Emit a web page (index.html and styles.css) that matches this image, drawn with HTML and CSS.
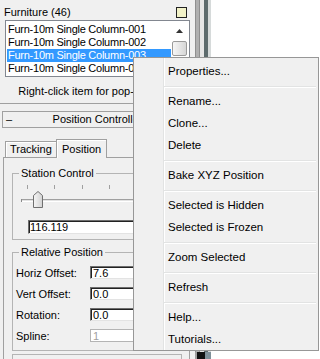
FILE: index.html
```html
<!DOCTYPE html>
<html lang="en">
<head>
  <meta charset="UTF-8" />
  <title>Furniture Rollout</title>
  <link rel="stylesheet" href="styles.css">
</head>
<body>
  <div class="screen">
    <div class="panel">
      <div class="rollout-head">
        <span>Furniture (46)</span>
        <span class="swatch"></span>
      </div>

      <div class="listbox">
        <ul class="items">
          <li>Furn-10m Single Column-001</li>
          <li>Furn-10m Single Column-002</li>
          <li class="selected">Furn-10m Single Column-003</li>
          <li>Furn-10m Single Column-004</li>
        </ul>
        <div class="scrollbar">
          <svg class="arrow-up" width="7" height="4" viewBox="0 0 7 4"><polygon points="0,4 3.5,0 7,4" fill="#333"/></svg>
          <div class="thumb"></div>
        </div>
      </div>

      <p class="hint">Right-click item for pop-up menu</p>

      <div class="rollout-bar">
        <span class="minus">–</span>
        <span class="bar-title">Position Controller</span>
      </div>

      <div class="tabs">
        <div class="tab tracking">Tracking</div>
        <div class="tab active">Position</div>
      </div>

      <div class="tab-page">
        <fieldset class="group">
          <legend>Station Control</legend>
          <svg class="slider" width="150" height="30" viewBox="0 0 150 30">
            <g stroke="#a0a0a0">
              <line x1="6.5" y1="5" x2="6.5" y2="9"/>
              <line x1="33.5" y1="5" x2="33.5" y2="9"/>
              <line x1="61.5" y1="5" x2="61.5" y2="9"/>
              <line x1="88.5" y1="5" x2="88.5" y2="9"/>
            </g>
            <line x1="0" y1="19.5" x2="150" y2="19.5" stroke="#a0a0a0"/>
            <line x1="0" y1="20.5" x2="150" y2="20.5" stroke="#e3e3e3"/>
            <line x1="1" y1="21.5" x2="150" y2="21.5" stroke="#ffffff"/>
            <line x1="0.5" y1="19" x2="0.5" y2="22" stroke="#8a8a8a"/>
            <defs>
              <linearGradient id="thumbFill" x1="0" y1="0" x2="1" y2="0">
                <stop offset="0" stop-color="#f6f6f6"/>
                <stop offset="1" stop-color="#d2d2d2"/>
              </linearGradient>
            </defs>
            <polygon points="12.5,27.5 12.5,15.5 17,11.5 21.5,15.5 21.5,27.5" fill="url(#thumbFill)" stroke="#707070"/>
          </svg>
          <input class="field wide" type="text" value="116.119">
        </fieldset>

        <fieldset class="group">
          <legend>Relative Position</legend>
          <div class="rows">
            <div class="row"><span class="label">Horiz Offset:</span><input class="field" type="text" value="7.6"></div>
            <div class="row"><span class="label">Vert Offset:</span><input class="field" type="text" value="0.0"></div>
            <div class="row"><span class="label">Rotation:</span><input class="field" type="text" value="0.0"></div>
            <div class="row"><span class="label">Spline:</span><input class="field" type="text" value="1" disabled></div>
          </div>
        </fieldset>

        <div class="group-next"></div>
      </div>
    </div>

    <div class="divider">
      <div class="divider-top"></div>
      <div class="divider-bottom"></div>
    </div>

    <div class="menu">
      <div class="menu-item">Properties...</div>
      <div class="menu-sep"></div>
      <div class="menu-item">Rename...</div>
      <div class="menu-item">Clone...</div>
      <div class="menu-item">Delete</div>
      <div class="menu-sep"></div>
      <div class="menu-item">Bake XYZ Position</div>
      <div class="menu-sep"></div>
      <div class="menu-item">Selected is Hidden</div>
      <div class="menu-item">Selected is Frozen</div>
      <div class="menu-sep"></div>
      <div class="menu-item">Zoom Selected</div>
      <div class="menu-sep"></div>
      <div class="menu-item">Refresh</div>
      <div class="menu-sep"></div>
      <div class="menu-item">Help...</div>
      <div class="menu-item">Tutorials...</div>
    </div>
  </div>
</body>
</html>
```

FILE: styles.css
```css
body {
  margin: 0;
  font-family: "Liberation Sans", Arial, sans-serif;
  font-size: 11px;
  color: #000;
  background: #fff;
}
.screen {
  position: relative;
  display: flex;
  width: 320px;
  height: 359px;
  overflow: hidden;
}
.panel {
  flex: none;
  width: 195px;
  background: #f0f0f0;
}

/* rollout title + swatch */
.rollout-head {
  display: flex;
  height: 20px;
  box-sizing: border-box;
  padding: 6px 0 0 4px;
  line-height: 13px;
}
.swatch {
  width: 9px;
  height: 9px;
  margin: 1px 8px 0 auto;
  border: 1px solid #222;
  background: #f2f2c8;
}

/* list box */
.listbox {
  display: flex;
  width: 185px;
  height: 57px;
  box-sizing: border-box;
  margin-left: 5px;
  border: 1px solid #828790;
  background: #fff;
}
.items {
  flex: 1;
  margin: 0;
  padding: 2px 0 0 1px;
  list-style: none;
  overflow: hidden;
}
.items li {
  height: 13px;
  line-height: 13px;
  padding-left: 1px;
  letter-spacing: -0.25px;
  white-space: nowrap;
}
.items li.selected {
  background: #3399ff;
  color: #fff;
}
.scrollbar {
  width: 17px;
  margin-right: 1px;
  display: flex;
  flex-direction: column;
  align-items: center;
}
.arrow-up {
  display: block;
  margin-top: 8px;
}
.thumb {
  width: 13px;
  height: 13px;
  margin-top: 8px;
  border: 1px solid #9a9a9a;
  border-radius: 2px;
  background: linear-gradient(to right, #f6f6f6, #d6d6d6);
}

.hint {
  margin: 0;
  height: 27px;
  box-sizing: border-box;
  padding-top: 8px;
  line-height: 13px;
  text-align: center;
  white-space: nowrap;
  border-bottom: 1px solid #a0a0a0;
}

/* rollout bar */
.rollout-bar {
  display: grid;
  grid-template-columns: 1fr auto 1fr;
  width: 191px;
  box-sizing: border-box;
  margin: 7px 0 0 2px;
  padding: 1px 3px;
  line-height: 13px;
  border: 1px solid #a0a0a0;
  white-space: nowrap;
}
.minus {
  justify-self: start;
}

/* tabs */
.tabs {
  display: flex;
  align-items: flex-end;
  height: 18px;
  margin-top: 11px;
  padding-left: 5px;
}
.tab {
  height: 16px;
  box-sizing: border-box;
  padding: 1px 0 0 4px;
  line-height: 13px;
  border: 1px solid #a0a0a0;
  border-bottom: none;
  background: #f0f0f0;
  box-shadow: inset 1px 1px 0 #fff;
}
.tracking {
  width: 52px;
}
.tab.active {
  position: relative;
  width: 51px;
  height: 19px;
  margin: 0 0 -1px -1px;
  padding: 3px 0 0 5px;
}
.tab-page {
  width: 187px;
  height: 202px;
  box-sizing: border-box;
  margin-left: 3px;
  padding-left: 8px;
  border: 1px solid #a0a0a0;
  border-bottom: none;
}

/* group boxes */
.group {
  width: 170px;
  box-sizing: border-box;
  margin: 9px 0 0;
  padding: 0 0 5px;
  border: 1px solid #b4b4b4;
  min-inline-size: 0;
}
.group + .group {
  margin-top: 6px;
  padding-bottom: 4px;
}
.group legend {
  margin-left: 6px;
  padding: 0 2px;
  line-height: 13px;
}
.slider {
  display: block;
  margin-left: 8px;
}
.field {
  height: 13px;
  box-sizing: border-box;
  margin: 0;
  padding: 0 0 0 2px;
  font: 11px "Liberation Sans", Arial, sans-serif;
  color: #000;
  background: #fff;
  border: 1px solid;
  border-color: #6d6d6d #e3e3e3 #e3e3e3 #6d6d6d;
  box-shadow: inset 1px 1px 0 #222;
  outline: none;
}
.field.wide {
  display: block;
  width: 150px;
  height: 14px;
  margin: 10px 0 0 15px;
  padding-left: 1px;
}
.field:disabled {
  color: #a0a0a0;
  border-color: #b4b4b4;
  box-shadow: none;
}
.rows {
  padding: 3px 0 0 3px;
}
.row {
  display: flex;
  align-items: center;
  height: 21px;
}
.label {
  width: 74px;
}
.row .field {
  width: 85px;
}
.group-next {
  width: 170px;
  height: 20px;
  box-sizing: border-box;
  margin-top: 3px;
  border: 1px solid #b4b4b4;
}

/* divider strip on the right */
.divider {
  flex: none;
  display: flex;
  flex-direction: column;
  width: 16px;
}
.divider-top {
  flex: 1;
  background: linear-gradient(to right, #8f8f8f 0 1px, #b0b0b0 1px 4px, #8f8f8f 4px 5px, #e6e6e6 5px 9px, #5d6b6d 9px 13px, #d6dada 13px 16px);
}
.divider-bottom {
  height: 7px;
  background: linear-gradient(to right, #a0a0a0 0 2px, #111 2px 10px, #7f9099 10px 16px);
}

/* pop-up menu */
.menu {
  position: absolute;
  left: 133px;
  top: 57px;
  width: 186px;
  box-sizing: border-box;
  padding-top: 2px;
  font-size: 11.5px;
  border: 1px solid #979797;
  background: linear-gradient(to right, transparent 29px, #e2e3e3 29px 30px, #fff 30px 31px, transparent 31px), #f0f0f0;
}
.menu-item {
  height: 22px;
  box-sizing: border-box;
  padding: 1px 0 0 34px;
  line-height: 21px;
  white-space: nowrap;
}
.menu-sep {
  margin: 4px 2px 2px 30px;
  border-top: 1px solid #e2e3e3;
  border-bottom: 1px solid #fff;
}
```
